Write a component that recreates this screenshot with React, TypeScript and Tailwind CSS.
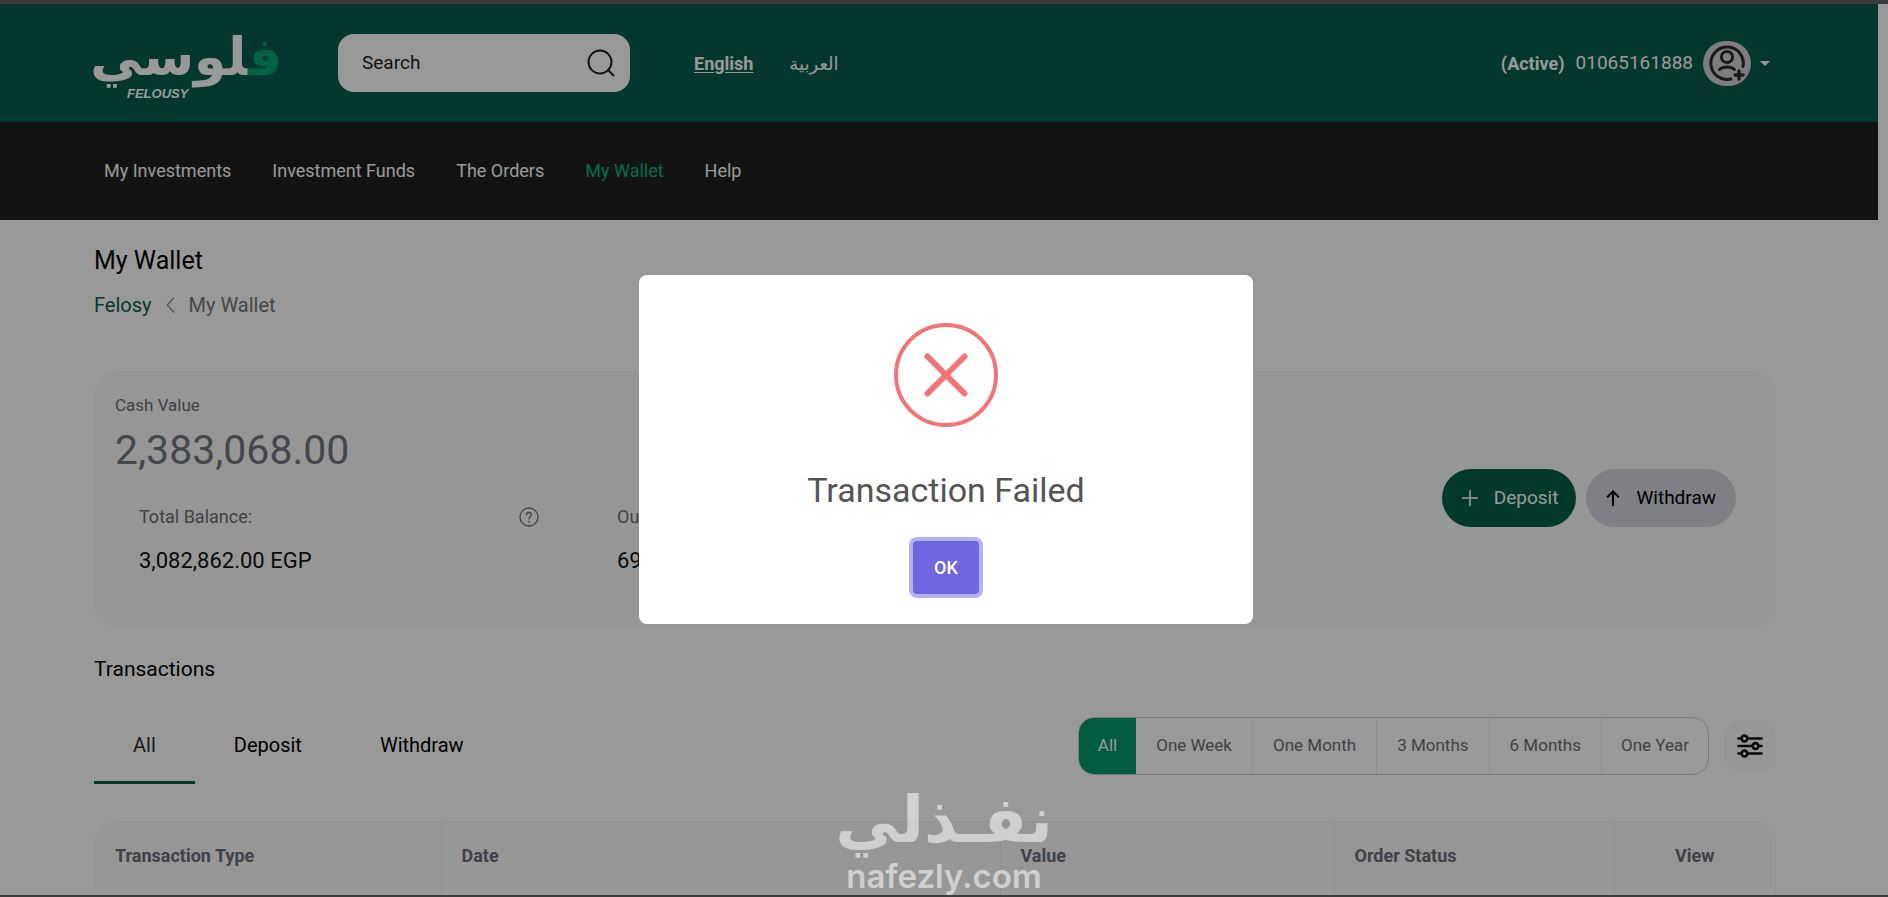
import { useState } from 'react';

const navLinks = ['My Investments', 'Investment Funds', 'The Orders', 'My Wallet', 'Help'];
const tabs = ['All', 'Deposit', 'Withdraw'];
const periods = ['All', 'One Week', 'One Month', '3 Months', '6 Months', 'One Year'];

function SearchIcon() {
  return (
    <svg viewBox="0 0 28 28" className="h-7 w-7" fill="none" stroke="currentColor" strokeWidth="2" strokeLinecap="round" aria-hidden="true">
      <circle cx="13" cy="13" r="11.5" />
      <path d="M21 21 L26.5 26.5" />
    </svg>
  );
}

function AvatarIcon() {
  return (
    <svg viewBox="0 0 36 36" className="h-9 w-9" fill="none" stroke="currentColor" strokeWidth="3" strokeLinecap="round" aria-hidden="true">
      <path d="M34 21.5 A16.2 16.2 0 1 0 22 34" />
      <circle cx="18" cy="12" r="5.6" />
      <path d="M10.5 24.5 C14 21 22 21 25.5 24.5" />
      <path d="M30 26 V34 M26 30 H34" strokeWidth="3.4" />
    </svg>
  );
}

function SlidersIcon() {
  return (
    <svg viewBox="0 0 26 24" className="h-6 w-[26px]" fill="none" stroke="currentColor" strokeWidth="2.6" strokeLinecap="round" aria-hidden="true">
      <path d="M1.5 4.5 H4.5 M10.5 4.5 H24.5" />
      <circle cx="7.5" cy="4.5" r="2.9" />
      <path d="M1.5 12 H15.5 M21.5 12 H24.5" />
      <circle cx="18.5" cy="12" r="2.9" />
      <path d="M1.5 19.5 H4.5 M10.5 19.5 H24.5" />
      <circle cx="7.5" cy="19.5" r="2.9" />
    </svg>
  );
}

function HelpIcon() {
  return (
    <svg viewBox="0 0 20 20" className="h-5 w-5" fill="none" stroke="currentColor" strokeWidth="1.3" strokeLinecap="round" aria-hidden="true">
      <circle cx="10" cy="10" r="9" />
      <path d="M7.6 7.7 C7.7 4.7 12.4 4.8 12.3 7.7 C12.2 9.6 10 9.6 10 12" />
      <path d="M10 14.6 V14.8" strokeWidth="1.7" />
    </svg>
  );
}

function Logo() {
  return (
    <a href="#" className="relative block h-[78px] w-[188px] text-white" aria-label="Felousy">
      <span dir="rtl" lang="ar" className="block text-right font-['DejaVu_Sans'] text-[52px] leading-[66px] font-bold">
        <span className="text-[#02a873]">ف</span>لوسي
      </span>
      <span className="absolute bottom-0 left-[33px] font-['Liberation_Sans'] text-[13px] leading-4 font-bold italic">FELOUSY</span>
    </a>
  );
}

function Header() {
  return (
    <header className="mr-[10px] text-white">
      <div className="flex h-[118px] items-center bg-[#085e4d] pr-[108px] pl-[94px]">
        <Logo />
        <label className="ml-14 flex h-[58px] w-[292px] items-center rounded-2xl bg-white pr-[15px] pl-6 text-[#212121]">
          <input type="search" aria-label="Search" placeholder="Search" className="min-w-0 flex-1 text-[19px] outline-none placeholder:text-[#212121]" />
          <SearchIcon />
        </label>
        <div className="ml-16 flex items-center gap-9 text-[18px]">
          <a href="#" className="font-bold underline underline-offset-2">English</a>
          <a href="#" lang="ar" className="font-['DejaVu_Sans'] text-[18px]">العربية</a>
        </div>
        <button type="button" className="ml-auto flex items-center text-[19px]">
          <span className="mr-[11px] text-[18px] font-bold">(Active)</span>
          <span>01065161888</span>
          <span className="ml-[10px] flex h-[45px] w-12 items-center justify-center rounded-full bg-[#d2d2d6] text-[#2c2c30]">
            <AvatarIcon />
          </span>
          <svg viewBox="0 0 10 5" className="ml-[9px] h-[5px] w-[10px]" fill="currentColor" aria-hidden="true">
            <path d="M0 0 H10 L5 5 Z" />
          </svg>
        </button>
      </div>
      <nav className="flex h-[98px] items-center gap-[41px] bg-[#212121] pb-px pl-[104px] text-[18px]">
        {navLinks.map((link) => (
          <a key={link} href="#" className={link === 'My Wallet' ? 'text-[#05b87d]' : ''}>
            {link}
          </a>
        ))}
      </nav>
    </header>
  );
}

function BalanceCard() {
  return (
    <section className="mt-[52px] flex h-[256px] items-start rounded-3xl border border-[#f8f8f8] bg-[#fbfbfb] pr-[39px] pl-5">
      <div className="min-w-0 flex-1">
        <p className="mt-[19px] text-[17px] leading-7 text-[#6c6f73]">Cash Value</p>
        <p className="mt-[6px] text-[41px] leading-[50px] text-[#72777e]">2,383,068.00</p>
        <div className="mt-7 flex gap-[78px] pl-6">
          <div className="w-[400px] shrink-0">
            <div className="flex items-center justify-between text-[18px] leading-7 text-[#6c6f73]">
              Total Balance:
              <HelpIcon />
            </div>
            <p className="mt-4 text-[22px] leading-7 text-[#121212]">3,082,862.00 EGP</p>
          </div>
          <div className="w-[400px]">
            <div className="text-[18px] leading-7 text-[#6c6f73]">Outstanding Balance:</div>
            <p className="mt-4 text-[22px] leading-7 text-[#121212]">699,794.00 EGP</p>
          </div>
        </div>
      </div>
      <div className="mt-[97px] flex gap-[10px] text-[19px]">
        <button type="button" className="flex h-[58px] items-center gap-4 rounded-full bg-[#066049] pr-[18px] pl-5 text-white">
          <svg viewBox="0 0 16 16" className="h-4 w-4" fill="none" stroke="currentColor" strokeWidth="1.6" aria-hidden="true">
            <path d="M8 0 V16 M0 8 H16" />
          </svg>
          Deposit
        </button>
        <button type="button" className="flex h-[58px] items-center gap-4 rounded-full bg-[#d4d5de] px-5 text-black">
          <svg viewBox="0 0 14 16" className="h-4 w-[14px]" fill="none" stroke="currentColor" strokeWidth="2" aria-hidden="true">
            <path d="M7 16 V1.5 M1.2 7.3 L7 1.5 L12.8 7.3" />
          </svg>
          Withdraw
        </button>
      </div>
    </section>
  );
}

function Filters() {
  const [tab, setTab] = useState('All');
  const [period, setPeriod] = useState('All');
  return (
    <div className="mt-[23px] flex items-center justify-between">
      <div role="tablist" className="flex text-[20px]">
        {tabs.map((name) => (
          <button
            key={name}
            role="tab"
            type="button"
            aria-selected={tab === name}
            onClick={() => setTab(name)}
            className={`h-[76px] border-b-3 px-[39px] ${tab === name ? 'border-[#066049] text-[#303030]' : 'border-transparent text-black'}`}
          >
            {name}
          </button>
        ))}
      </div>
      <div className="flex items-center gap-[15px]">
        <div className="flex h-[58px] overflow-hidden rounded-2xl border border-[#cfcfd2] text-[17px] text-[#6c6f73]">
          {periods.map((name, i) => (
            <button
              key={name}
              type="button"
              onClick={() => setPeriod(name)}
              className={`${i === 0 || i === periods.length - 1 ? 'px-[19px]' : 'px-5'} ${period === name ? 'bg-[#02996f] text-white' : i > 1 ? 'border-l border-[#ebebed]' : ''}`}
            >
              {name}
            </button>
          ))}
        </div>
        <button type="button" aria-label="Filters" className="flex h-[52px] w-[52px] items-center justify-center rounded-2xl bg-[#f8fafb] text-[#121212]">
          <SlidersIcon />
        </button>
      </div>
    </div>
  );
}

function TransactionsTable() {
  const cell = 'h-[66px] border-l border-[#ededef] px-5 text-left font-bold first:border-l-0';
  return (
    <div className="mt-[37px] overflow-hidden rounded-t-3xl border border-[#f4f4f5] text-[18px] text-[#6a6e77]">
      <table className="w-full table-fixed border-collapse">
        <thead className="bg-[#fafafa]">
          <tr>
            <th className={`${cell} w-[346px]`}>Transaction Type</th>
            <th className={cell}>Date</th>
            <th className={`${cell} w-[334px]`}>Value</th>
            <th className={`${cell} w-[280px]`}>Order Status</th>
            <th className="h-[66px] w-[161px] border-l border-[#ededef] text-center font-bold">View</th>
          </tr>
        </thead>
        <tbody>
          <tr>
            <td className={cell} />
            <td className={cell} />
            <td className={cell} />
            <td className={cell} />
            <td className={cell} />
          </tr>
        </tbody>
      </table>
    </div>
  );
}

function FailureDialog({ onClose }: { onClose: () => void }) {
  return (
    <div role="alertdialog" aria-labelledby="dialog-title" className="flex w-[614px] flex-col items-center rounded-lg bg-white pt-12 pb-[30px] font-[Roboto]">
      <svg viewBox="0 0 104 104" className="h-[104px] w-[104px]" fill="none" stroke="#f27474" aria-hidden="true">
        <circle cx="52" cy="52" r="50" strokeWidth="4" />
        <path d="M33.5 33.5 L70.5 70.5 M70.5 33.5 L33.5 70.5" strokeWidth="6" strokeLinecap="round" />
      </svg>
      <h2 id="dialog-title" className="mt-[38px] text-[34px] leading-[50px] text-[#545454]">Transaction Failed</h2>
      <button type="button" onClick={onClose} className="mt-[26px] h-[53px] w-[66px] rounded-[4px] bg-[#7066e0] text-[18px] font-medium text-white ring-4 ring-[#b7b2ef]">
        OK
      </button>
    </div>
  );
}

export default function App() {
  const [open, setOpen] = useState(true);
  return (
    <div className="relative flex h-screen flex-col overflow-hidden border-t-4 border-b-2 border-[#3d3b3d] bg-white font-[Roboto]">
      <Header />
      <main className="pr-[112px] pl-[94px]">
        <h1 className="mt-[23px] text-[25px] leading-9 text-black">My Wallet</h1>
        <div className="mt-3 flex items-center text-[20px] leading-7 text-[#75777b]">
          <a href="#" className="text-[#066049]">Felosy</a>
          <svg viewBox="0 0 9 16" className="mx-[14px] h-4 w-[9px]" fill="none" stroke="#8b8d91" strokeWidth="1.4" aria-hidden="true">
            <path d="M8 0.5 L1.2 8 L8 15.5" />
          </svg>
          <span>My Wallet</span>
        </div>
        <BalanceCard />
        <h2 className="mt-[26px] text-[21px] leading-8 text-black">Transactions</h2>
        <Filters />
        <TransactionsTable />
      </main>
      {open && (
        <div className="absolute inset-0 flex items-center justify-center bg-black/40 pl-1">
          <FailureDialog onClose={() => setOpen(false)} />
        </div>
      )}
      <div className="pointer-events-none absolute inset-x-0 bottom-0 flex flex-col items-center pb-px text-white opacity-55">
        <span dir="rtl" lang="ar" className="font-['DejaVu_Sans'] text-[64px] leading-[76px] font-bold">نفـذلي</span>
        <span className="font-[Inter] text-[33px] leading-9 font-semibold">nafezly.com</span>
      </div>
    </div>
  );
}
